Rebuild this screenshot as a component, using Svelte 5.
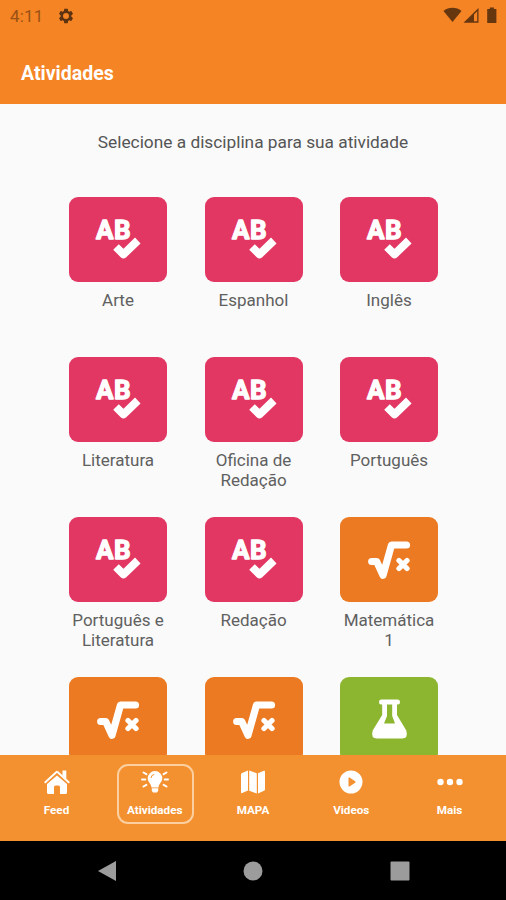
<script>
  const subjects = [
    { name: 'Arte', kind: 'language' },
    { name: 'Espanhol', kind: 'language' },
    { name: 'Inglês', kind: 'language' },
    { name: 'Literatura', kind: 'language' },
    { name: 'Oficina de Redação', kind: 'language' },
    { name: 'Português', kind: 'language' },
    { name: 'Português e Literatura', kind: 'language' },
    { name: 'Redação', kind: 'language' },
    { name: 'Matemática 1', kind: 'math' },
    { name: '', kind: 'math' },
    { name: '', kind: 'math' },
    { name: '', kind: 'science' }
  ];

  const tabs = ['Feed', 'Atividades', 'MAPA', 'Videos', 'Mais'];
  let active = $state('Atividades');
</script>

<div class="screen">
  <header>
    <div class="status">
      <span class="time">4:11</span>
      <svg class="gear" width="18" height="18" viewBox="0 0 24 24">
        <path fill-rule="evenodd" d="M19.14 12.94c.04-.3.06-.61.06-.94 0-.32-.02-.64-.07-.94l2.03-1.58c.18-.14.23-.41.12-.61l-1.92-3.32c-.12-.22-.37-.29-.59-.22l-2.39.96c-.5-.38-1.03-.7-1.62-.94l-.36-2.54c-.04-.24-.24-.41-.48-.41h-3.84c-.24 0-.43.17-.47.41l-.36 2.54c-.59.24-1.13.57-1.62.94l-2.39-.96c-.22-.08-.47 0-.59.22L2.74 8.87c-.12.21-.08.47.12.61l2.03 1.58c-.05.3-.09.63-.09.94s.02.64.07.94l-2.03 1.58c-.18.14-.23.41-.12.61l1.92 3.32c.12.22.37.29.59.22l2.39-.96c.5.38 1.03.7 1.62.94l.36 2.54c.05.24.24.41.48.41h3.84c.24 0 .44-.17.47-.41l.36-2.54c.59-.24 1.13-.56 1.62-.94l2.39.96c.22.08.47 0 .59-.22l1.92-3.32c.12-.22.07-.47-.12-.61l-2.01-1.58zM12 16a4 4 0 1 1 0-8 4 4 0 0 1 0 8z" />
      </svg>
      <svg class="signals" width="56" height="18" viewBox="0 0 56 18">
        <path d="M0.500 4C5.500-.3 13.500-.3 18.500 4L9.500 15z" />
        <path fill-rule="evenodd" d="M20.500 15.700 35.500 1v14.700zM31 7.500v6.800h3.200V4.300z" />
        <path d="M44.200 2h2.500V.5h4.200V2h2.500v14h-9.200z" />
      </svg>
    </div>
    <h1>Atividades</h1>
  </header>

  <main>
    <p>Selecione a disciplina para sua atividade</p>
    <div class="grid">
      {#each subjects as subject}
        <div class="subject">
          <div class="card {subject.kind}">
            <svg width="98" height="86" viewBox="0 0 98 86">
              {#if subject.kind === 'language'}
                <text x="27" y="42">A</text>
                <text x="45" y="42">B</text>
                <path class="line" stroke-width="8" d="m47 50 7.500 7.300 14.300-13.800" />
              {:else if subject.kind === 'math'}
                <path class="line round" stroke-width="7.200" d="M31.700 44.500h5l6.300 13.700 8.500-30.200h15" />
                <path class="line round" stroke-width="5.300" d="m59 43.500 8 8m0-8-8 8" />
              {:else}
                <path fill-rule="evenodd" d="M41 22.500h17q2 0 2 2.500t-2 2.500h-1V38l9.300 15.500q2.200 8-4.300 8H37q-6.500 0-4.300-8L42.200 38V27.500H41q-2 0-2-2.500t2-2.500zM47 27.500V39l-3 7.500h11L52.200 39V27.500z" />
              {/if}
            </svg>
          </div>
          {#if subject.name}
            <span>{subject.name}</span>
          {/if}
        </div>
      {/each}
    </div>
  </main>

  <nav>
    {#each tabs as tab}
      <button class:active={active === tab} onclick={() => (active = tab)}>
        <svg width="28" height="26" viewBox="0 0 28 26">
          {#if tab === 'Feed'}
            <path d="M14 6.500 24 15v8.500q0 1.500-1.500 1.500H17v-7q0-1.500-1.500-1.500h-3q-1.500 0-1.500 1.500v7H5.500Q4 25 4 23.500V15z" />
            <path class="line round" stroke-width="1.900" d="M2.300 13.300 13.200 3.200q.8-.7 1.600 0l10.900 10.100" />
            <path d="M19.500 1.500h3.800V10l-3.800-3.500z" />
          {:else if tab === 'Atividades'}
            <path d="M14 2a7.300 7.300 0 0 1 7.300 7.300c0 4-3.300 5-3.800 9.200h-7c-.5-4.200-3.800-5.200-3.800-9.200A7.300 7.300 0 0 1 14 2zM10.800 19.200h6.400v2.500l-1.200 1.800h-4l-1.200-1.800z" />
            <path class="faint" d="M10 9q.2-3 3.200-3.600" />
            <path class="line round" stroke-width="2" d="M1 10.500h3.300M23.700 10.500H27M2.500 3.500l2.900 1.700M25.500 3.500l-2.900 1.700M2.500 17.500l2.900-1.700M25.500 17.500l-2.900-1.700" />
          {:else if tab === 'MAPA'}
            <path d="M2 5.500q0-1 1-1.500l6-2.500v20L3.200 24Q2 24.500 2 23.300zM10.200 1.500l7.600 2.800V24.500l-7.600-2.800zM19 4.300l5.800-2.500q1.200-.4 1.200.8v17.700q0 1-1 1.500l-6 2.700z" />
          {:else if tab === 'Videos'}
            <path fill-rule="evenodd" d="M14 1.500a11.500 11.500 0 1 1 0 23 11.500 11.500 0 0 1 0-23zM11.500 9v8q.2.900 1 .4l5.700-3.700q.8-.7 0-1.400l-5.700-3.700q-.8-.4-1 .4z" />
          {:else}
            <circle cx="4.500" cy="13" r="3.200" />
            <circle cx="14" cy="13" r="3.200" />
            <circle cx="23.500" cy="13" r="3.200" />
          {/if}
        </svg>
        <span>{tab}</span>
      </button>
    {/each}
  </nav>

  <footer>
    <svg width="20" height="22" viewBox="0 0 20 22"><path d="M1 11 19 1v20z" /></svg>
    <svg width="20" height="22" viewBox="0 0 20 22"><circle cx="10" cy="11" r="9.500" /></svg>
    <svg width="20" height="22" viewBox="0 0 20 22"><rect x=".5" y="1.500" width="19" height="19" rx="1" /></svg>
  </footer>
</div>

<style>
  :global(body) {
    margin: 0;
  }
  .screen {
    display: flex;
    flex-direction: column;
    width: 506px;
    height: 900px;
    overflow: hidden;
    background: #fafafa;
    font-family: Roboto, sans-serif;
  }
  header {
    flex: none;
    height: 104px;
    background: #f58424;
    color: #fff;
  }
  .status {
    display: flex;
    align-items: center;
    height: 31px;
    padding: 0 7px 0 10px;
    fill: #66360f;
  }
  .time {
    width: 47px;
    font-size: 17px;
    letter-spacing: 0.2px;
    color: #9a5115;
  }
  .gear {
    fill: #5c3210;
  }
  .signals {
    margin-left: auto;
  }
  h1 {
    margin: 31px 0 0 21px;
    font-size: 19.500px;
    line-height: 24px;
    font-weight: 700;
  }
  main {
    flex: 1;
    min-height: 0;
    overflow: hidden;
  }
  p {
    margin: 26px 0 0;
    font-size: 17.300px;
    line-height: 24px;
    text-align: center;
    color: #555;
  }
  .grid {
    display: grid;
    grid-template-columns: repeat(3, 98px);
    grid-auto-rows: 160px;
    column-gap: 37.500px;
    justify-content: center;
    margin: 42.500px 0 0 1px;
  }
  .subject {
    display: flex;
    flex-direction: column;
    align-items: center;
    text-align: center;
    font-size: 17px;
    line-height: 20px;
    color: #606060;
  }
  .card {
    height: 85.500px;
    margin-bottom: 8px;
    border-radius: 9px;
    fill: #fff;
  }
  .card svg {
    display: block;
  }
  .language {
    background: #e23763;
  }
  .math {
    background: #eb7a22;
  }
  .science {
    background: #8db630;
  }
  text {
    font: 700 26px Roboto, sans-serif;
    stroke: #fff;
    stroke-width: 1.300;
    stroke-linejoin: round;
  }
  .line {
    fill: none;
    stroke: #fff;
    stroke-linejoin: round;
  }
  .round {
    stroke-linecap: round;
  }
  .faint {
    fill: none;
    stroke: #f39130;
  }
  nav {
    flex: none;
    display: flex;
    justify-content: space-between;
    align-items: flex-start;
    box-sizing: border-box;
    height: 86px;
    padding: 9px 17.500px 0 18.500px;
    background: #f39130;
  }
  button {
    display: flex;
    flex-direction: column;
    align-items: center;
    box-sizing: border-box;
    width: 77px;
    height: 60px;
    padding: 3px 1px 0 0;
    border: 2px solid transparent;
    border-radius: 11px;
    background: none;
    color: #fff;
    fill: #fff;
    font: 700 11.700px/14px Roboto, sans-serif;
  }
  button.active {
    border-color: #fbcf9f;
  }
  button svg {
    flex: none;
  }
  button span {
    margin-top: 8px;
  }
  footer {
    flex: none;
    display: flex;
    justify-content: space-between;
    align-items: center;
    box-sizing: border-box;
    height: 59px;
    padding: 0 96.500px;
    background: #000;
    fill: #9c9c9c;
  }
</style>
